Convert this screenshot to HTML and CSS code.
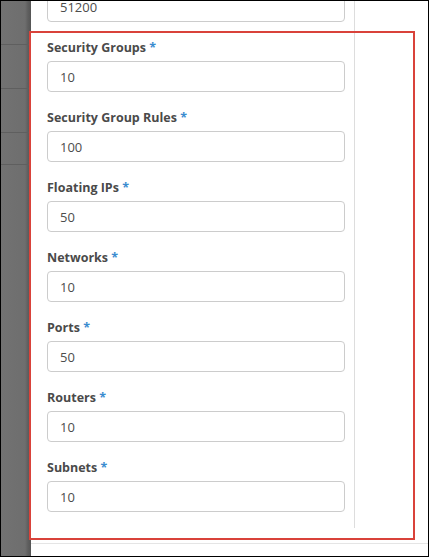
FILE: index.html
```html
<!DOCTYPE html>
<html lang="en">
<head>
    <meta charset="UTF-8">
    <meta name="viewport" content="width=device-width, initial-scale=1.0">
    <title>Project Quotas</title>
    <link rel="stylesheet" href="styles.css">
</head>
<body>
    <div class="frame">
        <div class="backdrop">
            <div class="backdrop-row"></div>
            <div class="backdrop-row"></div>
            <div class="backdrop-row"></div>
            <div class="backdrop-row short"></div>
        </div>

        <div class="modal">
            <div class="modal-body">
                <form class="quota-form">
                    <div class="form-group first">
                        <input type="text" class="form-control" value="51200">
                    </div>
                    <div class="form-group">
                        <label for="security_group">Security Groups <span class="required">*</span></label>
                        <input type="text" id="security_group" class="form-control" value="10">
                    </div>
                    <div class="form-group">
                        <label for="security_group_rule">Security Group Rules <span class="required">*</span></label>
                        <input type="text" id="security_group_rule" class="form-control" value="100">
                    </div>
                    <div class="form-group">
                        <label for="floatingip">Floating IPs <span class="required">*</span></label>
                        <input type="text" id="floatingip" class="form-control" value="50">
                    </div>
                    <div class="form-group">
                        <label for="network">Networks <span class="required">*</span></label>
                        <input type="text" id="network" class="form-control" value="10">
                    </div>
                    <div class="form-group">
                        <label for="port">Ports <span class="required">*</span></label>
                        <input type="text" id="port" class="form-control" value="50">
                    </div>
                    <div class="form-group">
                        <label for="router">Routers <span class="required">*</span></label>
                        <input type="text" id="router" class="form-control" value="10">
                    </div>
                    <div class="form-group">
                        <label for="subnet">Subnets <span class="required">*</span></label>
                        <input type="text" id="subnet" class="form-control" value="10">
                    </div>
                </form>
                <div class="help-col"></div>
            </div>
            <div class="modal-footer"></div>
        </div>

        <!-- highlight around the network quotas -->
        <div class="highlight"></div>
    </div>
</body>
</html>
```

FILE: styles.css
```css
body {
    margin: 0;
    font-family: "Open Sans", "DejaVu Sans", sans-serif;
    background-color: #fff;
}
.frame {
    position: relative;
    display: flex;
    width: 429px;
    height: 557px;
    border: 1px solid #000;
    box-sizing: border-box;
    overflow: hidden;
}
.backdrop {
    width: 30px;
    flex-shrink: 0;
    background: linear-gradient(to right, #727272 0, #6e6e6e 24px, #5e5e5e 27px, #555 30px);
}
.backdrop-row {
    height: 43px;
    border-bottom: 1px solid #5f5f5f;
}
.backdrop-row.short {
    height: 31px;
}
.modal {
    flex: 1;
    display: flex;
    flex-direction: column;
    background: white;
}
.modal-body {
    display: flex;
    padding-bottom: 15px;
}
.quota-form {
    width: 324px;
    box-sizing: border-box;
    padding: 0 9px 16px 16px;
    border-right: 1px solid #ddd;
}
.help-col {
    flex: 1;
}
.form-group {
    margin-bottom: 17px;
}
.form-group:last-child {
    margin-bottom: 0;
}
.form-group.first {
    margin-top: -10px;
}
label {
    display: block;
    height: 18px;
    line-height: 18px;
    margin-bottom: 4px;
    font-size: 12.5px;
    font-weight: bold;
    color: #4a4a4a;
}
.required {
    color: #3b8ccf;
}
.form-control {
    display: block;
    width: 100%;
    height: 31px;
    box-sizing: border-box;
    padding: 0 12px;
    border: 1px solid #ccc;
    border-radius: 4px;
    font-family: inherit;
    font-size: 13px;
    color: #4d4d4d;
    background: white;
}
.modal-footer {
    border-top: 1px solid #e5e5e5;
    flex: 1;
}
.highlight {
    position: absolute;
    left: 28px;
    top: 30px;
    width: 386px;
    height: 509px;
    border: 2px solid #d9423a;
    box-sizing: border-box;
    pointer-events: none;
}
```
